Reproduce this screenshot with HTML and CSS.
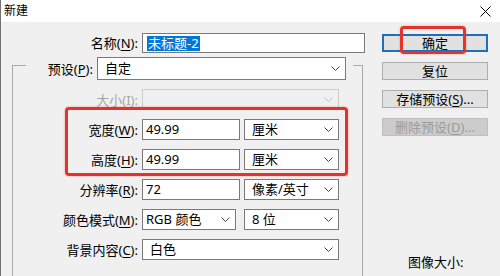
FILE: index.html
```html
<!DOCTYPE html>
<html>
<head>
    <title>新建</title>
    <meta charset="utf-8">

    <link rel="stylesheet" href="styles.css">
</head>

<body>
<div class="dialog">
    <div class="title_bar">
        <span class="title">新建</span>
        <svg class="close_icon" width="11" height="11" viewBox="0 0 11 11"><path d="M0.5 0.5 L10.5 10.5 M10.5 0.5 L0.5 10.5"/></svg>
    </div>

    <div class="dialog_body">
        <div class="form">
            <div class="name_row">
                <span class="label name_label">名称(<u>N</u>):</span>
                <div class="field input name_input"><span class="selected">未标题-2</span></div>
            </div>

            <fieldset class="group">
                <legend class="preset_row">
                    <span class="label preset_label">预设(<u>P</u>):</span>
                    <div class="field select preset_select">
                        <span>自定</span>
                        <svg class="chevron" width="9" height="5" viewBox="0 0 9 5"><path d="M0.5 0.5 L4.5 4.5 L8.5 0.5"/></svg>
                    </div>
                </legend>

                <div class="rows">
                    <span class="label label_disabled">大小(<u>I</u>):</span>
                    <div class="field select select_disabled wide">
                        <span></span>
                        <svg class="chevron" width="9" height="5" viewBox="0 0 9 5"><path d="M0.5 0.5 L4.5 4.5 L8.5 0.5"/></svg>
                    </div>

                    <span class="label">宽度(<u>W</u>):</span>
                    <div class="field input">49.99</div>
                    <div class="field select">
                        <span>厘米</span>
                        <svg class="chevron" width="9" height="5" viewBox="0 0 9 5"><path d="M0.5 0.5 L4.5 4.5 L8.5 0.5"/></svg>
                    </div>

                    <span class="label">高度(<u>H</u>):</span>
                    <div class="field input">49.99</div>
                    <div class="field select">
                        <span>厘米</span>
                        <svg class="chevron" width="9" height="5" viewBox="0 0 9 5"><path d="M0.5 0.5 L4.5 4.5 L8.5 0.5"/></svg>
                    </div>

                    <span class="label">分辨率(<u>R</u>):</span>
                    <div class="field input">72</div>
                    <div class="field select">
                        <span>像素/英寸</span>
                        <svg class="chevron" width="9" height="5" viewBox="0 0 9 5"><path d="M0.5 0.5 L4.5 4.5 L8.5 0.5"/></svg>
                    </div>

                    <span class="label">颜色模式(<u>M</u>):</span>
                    <div class="field select mode_select">
                        <span>RGB 颜色</span>
                        <svg class="chevron" width="9" height="5" viewBox="0 0 9 5"><path d="M0.5 0.5 L4.5 4.5 L8.5 0.5"/></svg>
                    </div>
                    <div class="field select">
                        <span>8 位</span>
                        <svg class="chevron" width="9" height="5" viewBox="0 0 9 5"><path d="M0.5 0.5 L4.5 4.5 L8.5 0.5"/></svg>
                    </div>

                    <span class="label">背景内容(<u>C</u>):</span>
                    <div class="field select wide">
                        <span>白色</span>
                        <svg class="chevron" width="9" height="5" viewBox="0 0 9 5"><path d="M0.5 0.5 L4.5 4.5 L8.5 0.5"/></svg>
                    </div>
                </div>
            </fieldset>
        </div>

        <div class="side">
            <div class="buttons">
                <button type="button" class="button button_default">确定</button>
                <button type="button" class="button">复位</button>
                <button type="button" class="button">存储预设(<u>S</u>)...</button>
                <button type="button" class="button button_disabled">删除预设(<u>D</u>)...</button>
            </div>
            <div class="image_size">图像大小:</div>
        </div>
    </div>

    <!-- red highlight marks drawn over the dialog -->
    <div class="mark mark_ok"></div>
    <div class="mark mark_size"></div>
</div>
</body>
</html>
```

FILE: styles.css
```css
* {box-sizing: border-box;}
body {
    margin: 0;
    background-color: #f0f0f0;
    font-family: "Noto Sans", "Noto Sans CJK SC", sans-serif;
    font-size: 13px;
    color: #000;
    overflow: hidden;
}
u {text-decoration-thickness: 1px; text-underline-offset: 2px;}

.dialog {
    position: relative;
    height: 276px;
    border-left: 1px solid #707070;
    overflow: hidden;
}
.title_bar {
    height: 22px;
    background-color: #fff;
    display: flex;
    align-items: center;
    justify-content: space-between;
    padding: 0 9px 0 3px;
}
.title {font-size: 12px; line-height: 16px;}
.close_icon {stroke: #000; stroke-width: 1; fill: none;}

.dialog_body {
    display: flex;
    align-items: flex-start;
    padding: 11px 0 0 11px;
}
.form {width: 353px;}

.label {
    text-align: right;
    line-height: 16px;
    white-space: nowrap;
}
.label_disabled {color: #a6a6a6;}

.name_row {
    display: flex;
    align-items: center;
    gap: 4px;
}
.name_label {width: 126px;}

.field {
    height: 21px;
    display: flex;
    align-items: center;
    justify-content: space-between;
    background-color: #fff;
    border: 1px solid #7a7a7a;
    padding: 0 5px 0 3px;
    line-height: 17px;
    white-space: nowrap;
}
.select {padding-left: 7px;}
.mode_select {width: 94px; padding-left: 3px;}
.select_disabled {background-color: #f0f0f0; border-color: #cccccc;}
.select_disabled .chevron {stroke: #bcbcbc;}
.chevron {stroke: #444; stroke-width: 1; fill: none; flex: none;}

.name_input {width: 223px; height: 20px; padding-left: 4px;}
.selected {
    background-color: #0078d7;
    color: #fff;
    padding: 0 1px;
    line-height: 15px;
}

.group {
    width: 351px;
    margin: -3px 0 0 0;
    padding: 0 0 40px 0;
    border: 1px solid #a9a9a9;
    min-inline-size: 0;
}
.preset_row {
    margin-left: 13px;
    padding: 7px 7px 0 0;
    display: flex;
    align-items: center;
    gap: 4px;
}
.preset_label {width: 67px;}
.preset_select {width: 249px; height: 23px;}

.rows {
    display: grid;
    grid-template-columns: 125px 98px 95px;
    grid-auto-rows: 21px;
    column-gap: 4px;
    row-gap: 9px;
    padding-top: 9px;
    align-items: center;
}
.wide {grid-column: span 2;}

.side {margin-left: 17px; width: 106px;}
.buttons {
    display: flex;
    flex-direction: column;
    gap: 10px;
    padding-top: 1px;
}
.button {
    height: 18px;
    padding: 0;
    background-color: #e1e1e1;
    border: 1px solid #adadad;
    font-family: inherit;
    font-size: 13px;
    line-height: 16px;
    color: #000;
}
.button_default {border: 2px solid #1d6fb7; line-height: 14px;}
.button_disabled {background-color: #cccccc; border-color: #bfbfbf; color: #9b9b9b;}
.image_size {
    margin-top: 118px;
    padding-left: 26px;
    line-height: 16px;
}

.mark {
    position: absolute;
    border: 3px solid #e2332c;
    border-radius: 4px;
    box-shadow: 0 0 2px rgba(226, 51, 44, 0.5);
}
.mark_ok {left: 399px; top: 26px; width: 66px; height: 28px;}
.mark_size {left: 64px; top: 107px; width: 283px; height: 69px;}
```
